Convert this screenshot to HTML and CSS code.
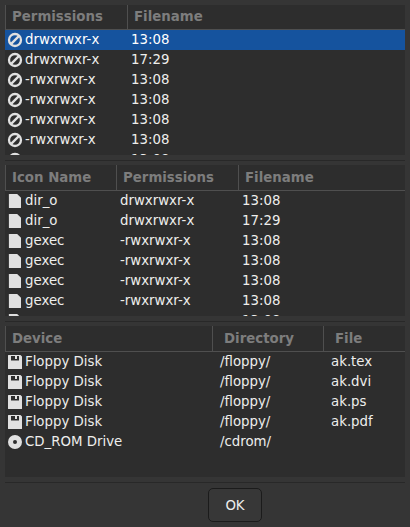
FILE: index.html
```html
<!DOCTYPE html>
<html lang="en">
<head>
<meta charset="utf-8">
<title>Lists</title>
<link rel="stylesheet" href="styles.css">
</head>
<body>
<svg class="defs" width="0" height="0" aria-hidden="true">
  <symbol id="no" viewBox="0 0 16 16"><circle cx="8" cy="8" r="6" fill="none" stroke="currentColor" stroke-width="2.3"/><path d="M3.6 12.4 12.4 3.6" stroke="currentColor" stroke-width="2.3"/></symbol>
  <symbol id="file" viewBox="0 0 16 16"><path d="M2.4 1H10.2l3.8 3.8v9.7a.5.5 0 0 1-.5.5H2.4a.5.5 0 0 1-.5-.5V1.5a.5.5 0 0 1 .5-.5z" fill="currentColor"/></symbol>
  <symbol id="floppy" viewBox="0 0 16 16"><path fill-rule="evenodd" d="M1.5 1H13.5l1.5 1.5v12a.5.5 0 0 1-.5.5h-13a.5.5 0 0 1-.5-.5v-13a.5.5 0 0 1 .5-.5zM4 2v4.5H12V2h-2v3H8V2z" fill="currentColor"/></symbol>
  <symbol id="cd" viewBox="0 0 16 16"><path fill-rule="evenodd" d="M8 1a7 7 0 1 0 0 14A7 7 0 0 0 8 1zm0 5a2 2 0 1 1 0 4 2 2 0 0 1 0-4z" fill="currentColor"/></symbol>
</svg>
<main class="dialog">
  <section class="pane pane-a">
    <div class="head"><span class="h perm-a">Permissions</span><span class="h rest">Filename</span></div>
    <div class="rows">
      <div class="row sel"><svg class="ic"><use href="#no"/></svg><span class="c c1">drwxrwxr-x</span><span class="c">13:08</span></div>
      <div class="row"><svg class="ic"><use href="#no"/></svg><span class="c c1">drwxrwxr-x</span><span class="c">17:29</span></div>
      <div class="row"><svg class="ic"><use href="#no"/></svg><span class="c c1">-rwxrwxr-x</span><span class="c">13:08</span></div>
      <div class="row"><svg class="ic"><use href="#no"/></svg><span class="c c1">-rwxrwxr-x</span><span class="c">13:08</span></div>
      <div class="row"><svg class="ic"><use href="#no"/></svg><span class="c c1">-rwxrwxr-x</span><span class="c">13:08</span></div>
      <div class="row"><svg class="ic"><use href="#no"/></svg><span class="c c1">-rwxrwxr-x</span><span class="c">13:08</span></div>
      <div class="row"><svg class="ic"><use href="#no"/></svg><span class="c c1">-rwxrwxr-x</span><span class="c">13:08</span></div>
    </div>
  </section>
  <hr class="sep">
  <section class="pane pane-b">
    <div class="head head-tall"><span class="h name-b">Icon Name</span><span class="h perm-b">Permissions</span><span class="h rest">Filename</span></div>
    <div class="rows">
      <div class="row"><svg class="ic"><use href="#file"/></svg><span class="c c2">dir_o</span><span class="c c3">drwxrwxr-x</span><span class="c">13:08</span></div>
      <div class="row"><svg class="ic"><use href="#file"/></svg><span class="c c2">dir_o</span><span class="c c3">drwxrwxr-x</span><span class="c">17:29</span></div>
      <div class="row"><svg class="ic"><use href="#file"/></svg><span class="c c2">gexec</span><span class="c c3">-rwxrwxr-x</span><span class="c">13:08</span></div>
      <div class="row"><svg class="ic"><use href="#file"/></svg><span class="c c2">gexec</span><span class="c c3">-rwxrwxr-x</span><span class="c">13:08</span></div>
      <div class="row"><svg class="ic"><use href="#file"/></svg><span class="c c2">gexec</span><span class="c c3">-rwxrwxr-x</span><span class="c">13:08</span></div>
      <div class="row"><svg class="ic"><use href="#file"/></svg><span class="c c2">gexec</span><span class="c c3">-rwxrwxr-x</span><span class="c">13:08</span></div>
      <div class="row"><svg class="ic"><use href="#file"/></svg><span class="c c2">gexec</span><span class="c c3">-rwxrwxr-x</span><span class="c">13:08</span></div>
    </div>
  </section>
  <hr class="sep">
  <section class="pane pane-c">
    <div class="head head-tall"><span class="h dev">Device</span><span class="h dir">Directory</span><span class="h rest">File</span></div>
    <div class="rows">
      <div class="row"><svg class="ic"><use href="#floppy"/></svg><span class="c c4">Floppy Disk</span><span class="c c5">/floppy/</span><span class="c">ak.tex</span></div>
      <div class="row"><svg class="ic"><use href="#floppy"/></svg><span class="c c4">Floppy Disk</span><span class="c c5">/floppy/</span><span class="c">ak.dvi</span></div>
      <div class="row"><svg class="ic"><use href="#floppy"/></svg><span class="c c4">Floppy Disk</span><span class="c c5">/floppy/</span><span class="c">ak.ps</span></div>
      <div class="row"><svg class="ic"><use href="#floppy"/></svg><span class="c c4">Floppy Disk</span><span class="c c5">/floppy/</span><span class="c">ak.pdf</span></div>
      <div class="row"><svg class="ic"><use href="#cd"/></svg><span class="c c4">CD_ROM Drive</span><span class="c c5">/cdrom/</span></div>
    </div>
  </section>
  <hr class="sep">
  <footer class="actions"><button class="ok" type="button">OK</button></footer>
</main>
</body>
</html>
```

FILE: styles.css
```css
html, body {
  margin: 0;
  height: 527px;
  overflow: hidden;
  background: #353535;
}
.defs { position: absolute; }
.dialog {
  display: flex;
  flex-direction: column;
  padding: 5px 5px 0;
  font-family: "DejaVu Sans", sans-serif;
  font-size: 13.33px;
  color: #eeeeec;
}
.pane {
  background: #2d2d2d;
  overflow: hidden;
  flex: none;
}
.pane-a { height: 150px; }
.pane-b { height: 151px; }
.pane-c { height: 151px; }
.head {
  display: flex;
  height: 24px;
  box-sizing: content-box;
  border-bottom: 1px solid #4f4f4f;
}
.head-tall { height: 25px; }
.h {
  display: flex;
  align-items: center;
  padding-left: 6px;
  padding-bottom: 1px;
  box-sizing: border-box;
  font-weight: 700;
  color: #7d7d7d;
  border-left: 1px solid #4f4f4f;
}
.perm-a { width: 122px; }
.name-b { width: 111px; }
.perm-b { width: 122px; }
.dev { width: 207px; }
.dir { width: 111px; padding-left: 11px; }
.rest { flex: 1; padding-left: 6px; }
.pane-c .rest { padding-left: 11px; }
.row {
  display: flex;
  align-items: center;
  height: 20px;
  padding-left: 2px;
}
.sel { background: #15539e; color: #fff; }
.ic {
  width: 16px;
  height: 16px;
  flex: none;
  margin-right: 2px;
  color: #e0e0e0;
}
.c { white-space: nowrap; padding-bottom: 2px; }
.c1 { width: 106px; }
.c2 { width: 95px; }
.c3 { width: 122px; }
.c4 { width: 195px; }
.c5 { width: 111px; }
.sep {
  flex: none;
  margin: 5px 0 4px;
  height: 1px;
  border: 0;
  background: #282828;
}
.actions {
  display: flex;
  padding: 1px 0 0 203px;
}
.ok {
  width: 54px;
  height: 34px;
  padding: 0;
  background: #373737;
  border: 1px solid #1b1b1b;
  border-radius: 5px;
  color: #eeeeec;
  font: 13.33px "DejaVu Sans", sans-serif;
}
```
